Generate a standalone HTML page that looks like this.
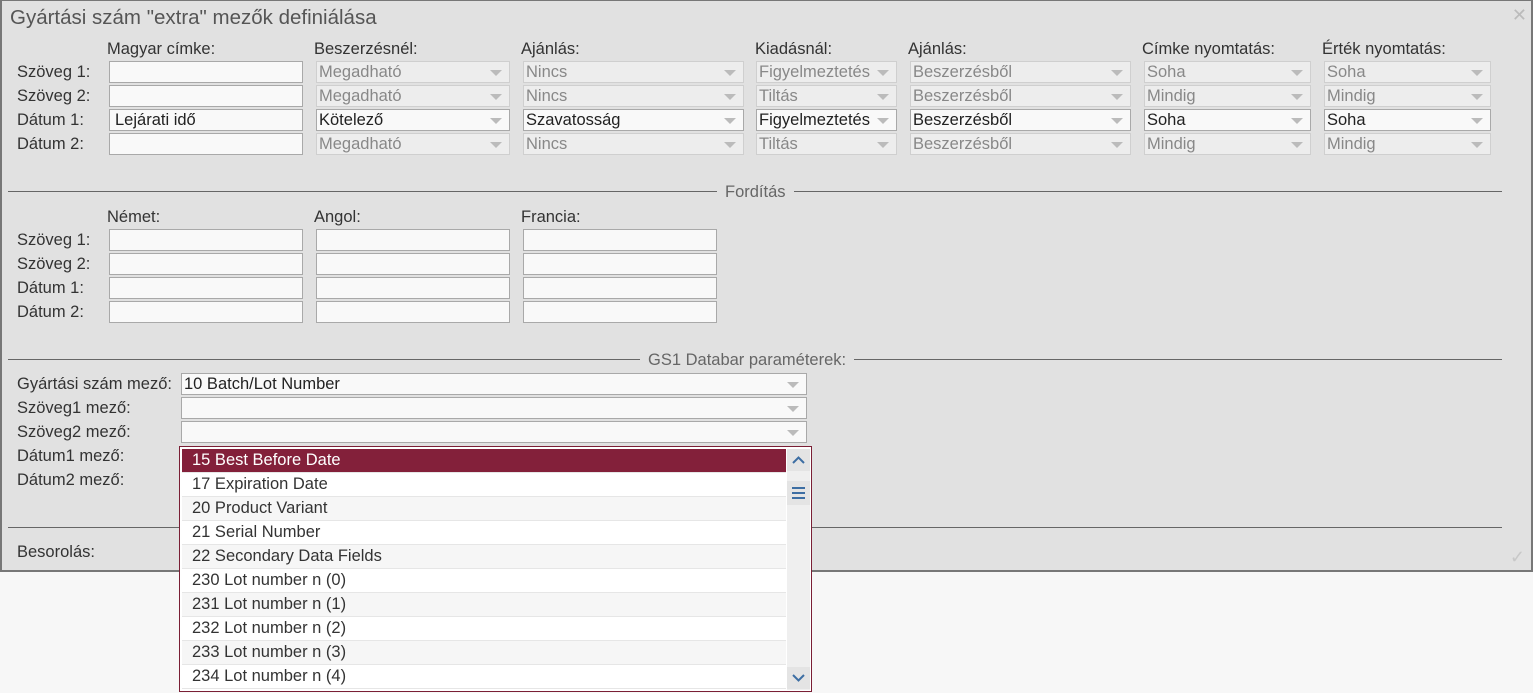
<!DOCTYPE html>
<html><head><meta charset="utf-8"><style>
*{box-sizing:border-box;margin:0;padding:0}
body{width:1533px;height:693px;background:#f7f7f7;font-family:"Liberation Sans",Arial,sans-serif;font-size:16.5px;color:#333;position:relative;overflow:hidden}
#dlg{position:absolute;left:0;top:0;width:1533px;height:572px;background:#e1e1e1;border:2px solid #777;border-top:1px solid #777}
.a{position:absolute;white-space:nowrap;line-height:18px}
.t{position:absolute;font-size:20.5px;color:#555;left:10px;top:6px;white-space:nowrap}
.in{position:absolute;height:22px;background:#f9f9f9;border:1px solid #a9a9a9;padding-left:5px;line-height:20px;color:#222;white-space:nowrap}
.sel{position:absolute;height:22px;background:#ededed;border:1px solid #cfcfcf;padding-left:2px;line-height:20px;color:#888;white-space:nowrap;overflow:hidden}
.sel.on{background:#f9f9f9;border-color:#a9a9a9;color:#222}
.sel::after{content:"";position:absolute;right:7px;top:8px;border-left:6px solid transparent;border-right:6px solid transparent;border-top:6px solid #bbb}
.hr{position:absolute;left:8px;width:1494px;height:1px;background:#666}
.lg{position:absolute;background:#e1e1e1;color:#666;padding:0 8px;white-space:nowrap;line-height:18px}
#dd{position:absolute;left:179px;top:446px;width:633px;height:246px;background:#fff;border:1px solid #7a1f35}
.it{position:absolute;left:2px;width:604px;height:24px;line-height:23px;padding-left:10px;border-bottom:1px solid #e6e6e6;color:#333;background:#fff;white-space:nowrap}
.it.alt{background:#f6f6f6}
.it.hl{background:#83203a;color:#fff}
</style></head><body>
<div id="dlg"></div>
<div class="t">Gyártási szám "extra" mezők definiálása</div>
<div class="a" style="right:6px;top:6px;font-size:18px;color:#bbb">✕</div>

<div class="a" style="left:107px;top:40px">Magyar címke:</div>
<div class="a" style="left:314px;top:40px">Beszerzésnél:</div>
<div class="a" style="left:521px;top:40px">Ajánlás:</div>
<div class="a" style="left:755px;top:40px">Kiadásnál:</div>
<div class="a" style="left:908px;top:40px">Ajánlás:</div>
<div class="a" style="left:1142px;top:40px">Címke nyomtatás:</div>
<div class="a" style="left:1322px;top:40px">Érték nyomtatás:</div>

<div class="a" style="left:17px;top:63px">Szöveg 1:</div>
<div class="a" style="left:17px;top:87px">Szöveg 2:</div>
<div class="a" style="left:17px;top:111px">Dátum 1:</div>
<div class="a" style="left:17px;top:135px">Dátum 2:</div>

<div class="in" style="left:109px;top:61px;width:194px"></div>
<div class="in" style="left:109px;top:85px;width:194px"></div>
<div class="in" style="left:109px;top:109px;width:194px">Lejárati idő</div>
<div class="in" style="left:109px;top:133px;width:194px"></div>

<div class="sel" style="left:316px;top:61px;width:194px">Megadható</div>
<div class="sel" style="left:316px;top:85px;width:194px">Megadható</div>
<div class="sel on" style="left:316px;top:109px;width:194px">Kötelező</div>
<div class="sel" style="left:316px;top:133px;width:194px">Megadható</div>

<div class="sel" style="left:523px;top:61px;width:221px">Nincs</div>
<div class="sel" style="left:523px;top:85px;width:221px">Nincs</div>
<div class="sel on" style="left:523px;top:109px;width:221px">Szavatosság</div>
<div class="sel" style="left:523px;top:133px;width:221px">Nincs</div>

<div class="sel" style="left:756px;top:61px;width:141px">Figyelmeztetés</div>
<div class="sel" style="left:756px;top:85px;width:141px">Tiltás</div>
<div class="sel on" style="left:756px;top:109px;width:141px">Figyelmeztetés</div>
<div class="sel" style="left:756px;top:133px;width:141px">Tiltás</div>

<div class="sel" style="left:910px;top:61px;width:221px">Beszerzésből</div>
<div class="sel" style="left:910px;top:85px;width:221px">Beszerzésből</div>
<div class="sel on" style="left:910px;top:109px;width:221px">Beszerzésből</div>
<div class="sel" style="left:910px;top:133px;width:221px">Beszerzésből</div>

<div class="sel" style="left:1144px;top:61px;width:167px">Soha</div>
<div class="sel" style="left:1144px;top:85px;width:167px">Mindig</div>
<div class="sel on" style="left:1144px;top:109px;width:167px">Soha</div>
<div class="sel" style="left:1144px;top:133px;width:167px">Mindig</div>

<div class="sel" style="left:1324px;top:61px;width:167px">Soha</div>
<div class="sel" style="left:1324px;top:85px;width:167px">Mindig</div>
<div class="sel on" style="left:1324px;top:109px;width:167px">Soha</div>
<div class="sel" style="left:1324px;top:133px;width:167px">Mindig</div>

<div class="hr" style="top:191px"></div>
<div class="lg" style="left:717px;top:183px">Fordítás</div>

<div class="a" style="left:107px;top:208px">Német:</div>
<div class="a" style="left:314px;top:208px">Angol:</div>
<div class="a" style="left:521px;top:208px">Francia:</div>
<div class="a" style="left:17px;top:231px">Szöveg 1:</div>
<div class="a" style="left:17px;top:255px">Szöveg 2:</div>
<div class="a" style="left:17px;top:279px">Dátum 1:</div>
<div class="a" style="left:17px;top:303px">Dátum 2:</div>
<div class="in" style="left:109px;top:229px;width:194px"></div>
<div class="in" style="left:109px;top:253px;width:194px"></div>
<div class="in" style="left:109px;top:277px;width:194px"></div>
<div class="in" style="left:109px;top:301px;width:194px"></div>
<div class="in" style="left:316px;top:229px;width:194px"></div>
<div class="in" style="left:316px;top:253px;width:194px"></div>
<div class="in" style="left:316px;top:277px;width:194px"></div>
<div class="in" style="left:316px;top:301px;width:194px"></div>
<div class="in" style="left:523px;top:229px;width:194px"></div>
<div class="in" style="left:523px;top:253px;width:194px"></div>
<div class="in" style="left:523px;top:277px;width:194px"></div>
<div class="in" style="left:523px;top:301px;width:194px"></div>

<div class="hr" style="top:359px"></div>
<div class="lg" style="left:640px;top:351px">GS1 Databar paraméterek:</div>

<div class="a" style="left:17px;top:375px">Gyártási szám mező:</div>
<div class="a" style="left:17px;top:399px">Szöveg1 mező:</div>
<div class="a" style="left:17px;top:423px">Szöveg2 mező:</div>
<div class="a" style="left:17px;top:447px">Dátum1 mező:</div>
<div class="a" style="left:17px;top:471px">Dátum2 mező:</div>
<div class="sel on" style="left:181px;top:373px;width:626px">10 Batch/Lot Number</div>
<div class="sel on" style="left:181px;top:397px;width:626px"></div>
<div class="sel on" style="left:181px;top:421px;width:626px"></div>

<div class="hr" style="top:527px"></div>
<div class="a" style="left:17px;top:543px">Besorolás:</div>
<div class="a" style="right:8px;top:548px;color:#c8c8c8;font-size:18px">✓</div>

<div id="dd">
<div class="it hl" style="top:2px">15 Best Before Date</div>
<div class="it" style="top:26px">17 Expiration Date</div>
<div class="it alt" style="top:50px">20 Product Variant</div>
<div class="it" style="top:74px">21 Serial Number</div>
<div class="it alt" style="top:98px">22 Secondary Data Fields</div>
<div class="it" style="top:122px">230 Lot number n (0)</div>
<div class="it alt" style="top:146px">231 Lot number n (1)</div>
<div class="it" style="top:170px">232 Lot number n (2)</div>
<div class="it alt" style="top:194px">233 Lot number n (3)</div>
<div class="it" style="top:218px">234 Lot number n (4)</div>
<div style="position:absolute;left:607px;top:2px;width:23px;height:241px;background:#efefef"></div>
<svg style="position:absolute;left:607px;top:2px" width="23" height="241">
<rect x="0" y="0" width="23" height="22" fill="#e4e4e4"/>
<path d="M6 14 L11.5 8.5 L17 14" stroke="#3d6ea3" stroke-width="2" fill="none"/>
<rect x="0" y="32" width="23" height="24" fill="#e4e4e4"/>
<path d="M5 39h13M5 44h13M5 49h13" stroke="#3d6ea3" stroke-width="2"/>
<rect x="0" y="218" width="23" height="22" fill="#e4e4e4"/>
<path d="M6 226 L11.5 231.5 L17 226" stroke="#3d6ea3" stroke-width="2" fill="none"/>
</svg>
</div>
</body></html>
